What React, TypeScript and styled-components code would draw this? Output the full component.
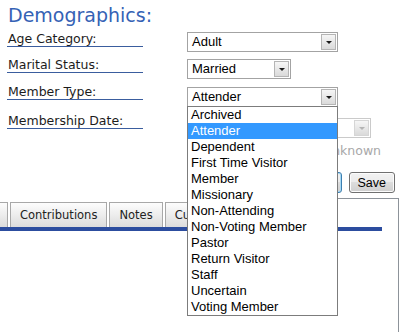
import React from 'react';
import styled, { createGlobalStyle } from 'styled-components';

const GlobalStyle = createGlobalStyle`
  html, body {
    margin: 0;
    padding: 0;
    background: #fff;
  }
  body {
    font-family: "DejaVu Sans", Verdana, sans-serif;
  }
`;

const Page = styled.div`
  width: 406px;
  height: 332px;
  overflow: hidden;
  background: #fff;
`;

const Title = styled.h2`
  margin: 4px 0 6px 8px;
  font: normal 19px/22px "DejaVu Sans", Verdana, sans-serif;
  color: #3562b5;
`;

const Form = styled.div`
  padding-left: 7px;
`;

const Row = styled.div<{ $h: number }>`
  display: grid;
  grid-template-columns: 180px auto;
  align-items: start;
  height: ${p => p.$h}px;
`;

const Label = styled.div<{ $lift?: number }>`
  width: 135px;
  padding-left: 1px;
  margin-top: ${p => -(p.$lift || 0)}px;
  font-size: 12.5px;
  line-height: 14px;
  color: #1c1c1c;
  border-bottom: 1px solid #3a5d9e;
  white-space: nowrap;
`;

const Select = styled.div<{ $w: number; $disabled?: boolean }>`
  position: relative;
  box-sizing: border-box;
  width: ${p => p.$w}px;
  height: 20px;
  border: 1px solid ${p => (p.$disabled ? '#cacaca' : '#a3a3a3')};
  background: #fff;
  font: 13px/18px "Liberation Sans", Arial, sans-serif;
  color: #000;
  padding-left: 4px;
`;

const Arrow = styled.span<{ $disabled?: boolean }>`
  position: absolute;
  top: 1px;
  right: 1px;
  width: 15px;
  height: 16px;
  box-sizing: border-box;
  border: 1px solid ${p => (p.$disabled ? '#d6d6d6' : '#b5b5b5')};
  background: linear-gradient(#f6f6f6, #dadada);
  display: flex;
  align-items: center;
  justify-content: center;
  &::after {
    content: '';
    border-left: 3px solid transparent;
    border-right: 3px solid transparent;
    border-top: 3px solid ${p => (p.$disabled ? '#b4b4b4' : '#1a1a1a')};
  }
`;

const ListBox = styled.ul`
  position: absolute;
  top: 18px;
  left: -1px;
  width: 151px;
  box-sizing: border-box;
  margin: 0;
  padding: 0;
  list-style: none;
  background: #fff;
  border: 1px solid #7c7c7c;
  z-index: 10;
`;

const Option = styled.li<{ $selected?: boolean }>`
  height: 16px;
  line-height: 16px;
  padding-left: 3px;
  background: ${p => (p.$selected ? '#3399ff' : 'transparent')};
  color: ${p => (p.$selected ? '#fff' : '#000')};
  white-space: nowrap;
`;

const UnknownLine = styled.label`
  display: flex;
  align-items: center;
  gap: 4px;
  margin: 4px 0 0 306px;
  height: 18px;
  font-size: 12.5px;
  line-height: 18px;
  color: #a8a8a8;
`;

const Check = styled.span`
  width: 11px;
  height: 11px;
  border: 1px solid #c4c4c4;
  background: #f4f4f4;
`;

const ButtonRow = styled.div`
  display: flex;
  justify-content: flex-end;
  gap: 7px;
  margin-top: 12px;
  padding-right: 11px;
`;

const Button = styled.button<{ $focused?: boolean }>`
  height: 21px;
  padding: 0 8px;
  font: 12.5px "Liberation Sans", Arial, sans-serif;
  color: #000;
  border: 1px solid ${p => (p.$focused ? '#3c7fb1' : '#707070')};
  border-radius: 3px;
  background: linear-gradient(#f2f2f2 0%, #ebebeb 50%, #dddddd 50%, #cfcfcf 100%);
  box-shadow: inset 0 0 0 1px ${p => (p.$focused ? '#a7d9f5' : '#fcfcfc')};
`;

const TabSection = styled.div`
  position: relative;
  box-sizing: border-box;
  width: 399px;
  height: 134px;
  margin-top: 5px;
  padding-top: 4px;
  border-right: 1px solid #8d939a;
  &::before {
    content: '';
    position: absolute;
    top: 0;
    left: 300px;
    right: 0;
    border-top: 1px solid #8d939a;
  }
`;

const TabStrip = styled.div`
  display: flex;
  gap: 2px;
  width: 382px;
  height: 25px;
  overflow: hidden;
`;

const Tab = styled.div<{ $stub?: boolean }>`
  box-sizing: border-box;
  flex: none;
  height: 25px;
  padding: ${p => (p.$stub ? '0' : '0 9px')};
  width: ${p => (p.$stub ? '8px' : 'auto')};
  border: 1px solid #a8a8a8;
  border-bottom: none;
  border-left: ${p => (p.$stub ? 'none' : '1px solid #a8a8a8')};
  background: linear-gradient(#fdfdfd, #dcdcdc);
  font-size: 11.5px;
  line-height: 24px;
  color: #222;
  white-space: nowrap;
`;

const Bar = styled.div`
  width: 382px;
  height: 4px;
  background: #2c4d9f;
`;

const memberTypes = [
  'Archived',
  'Attender',
  'Dependent',
  'First Time Visitor',
  'Member',
  'Missionary',
  'Non-Attending',
  'Non-Voting Member',
  'Pastor',
  'Return Visitor',
  'Staff',
  'Uncertain',
  'Voting Member',
];

export default function App() {
  return (
    <Page>
      <GlobalStyle />
      <Title>Demographics:</Title>
      <Form>
        <Row $h={27}>
          <Label>Age Category:</Label>
          <Select $w={151}>
            Adult
            <Arrow />
          </Select>
        </Row>
        <Row $h={28}>
          <Label $lift={1}>Marital Status:</Label>
          <Select $w={104}>
            Married
            <Arrow />
          </Select>
        </Row>
        <Row $h={31}>
          <Label $lift={2}>Member Type:</Label>
          <Select $w={151}>
            Attender
            <Arrow />
            <ListBox>
              {memberTypes.map(t => (
                <Option key={t} $selected={t === 'Attender'}>
                  {t}
                </Option>
              ))}
            </ListBox>
          </Select>
        </Row>
        <Row $h={20}>
          <Label $lift={4}>Membership Date:</Label>
          <Select $w={184} $disabled>
            <Arrow $disabled />
          </Select>
        </Row>
      </Form>
      <UnknownLine>
        <Check />
        Unknown
      </UnknownLine>
      <ButtonRow>
        <Button $focused>Cancel</Button>
        <Button>Save</Button>
      </ButtonRow>
      <TabSection>
        <TabStrip>
          <Tab $stub />
          <Tab>Contributions</Tab>
          <Tab>Notes</Tab>
          <Tab>Custom Fields</Tab>
        </TabStrip>
        <Bar />
      </TabSection>
    </Page>
  );
}
